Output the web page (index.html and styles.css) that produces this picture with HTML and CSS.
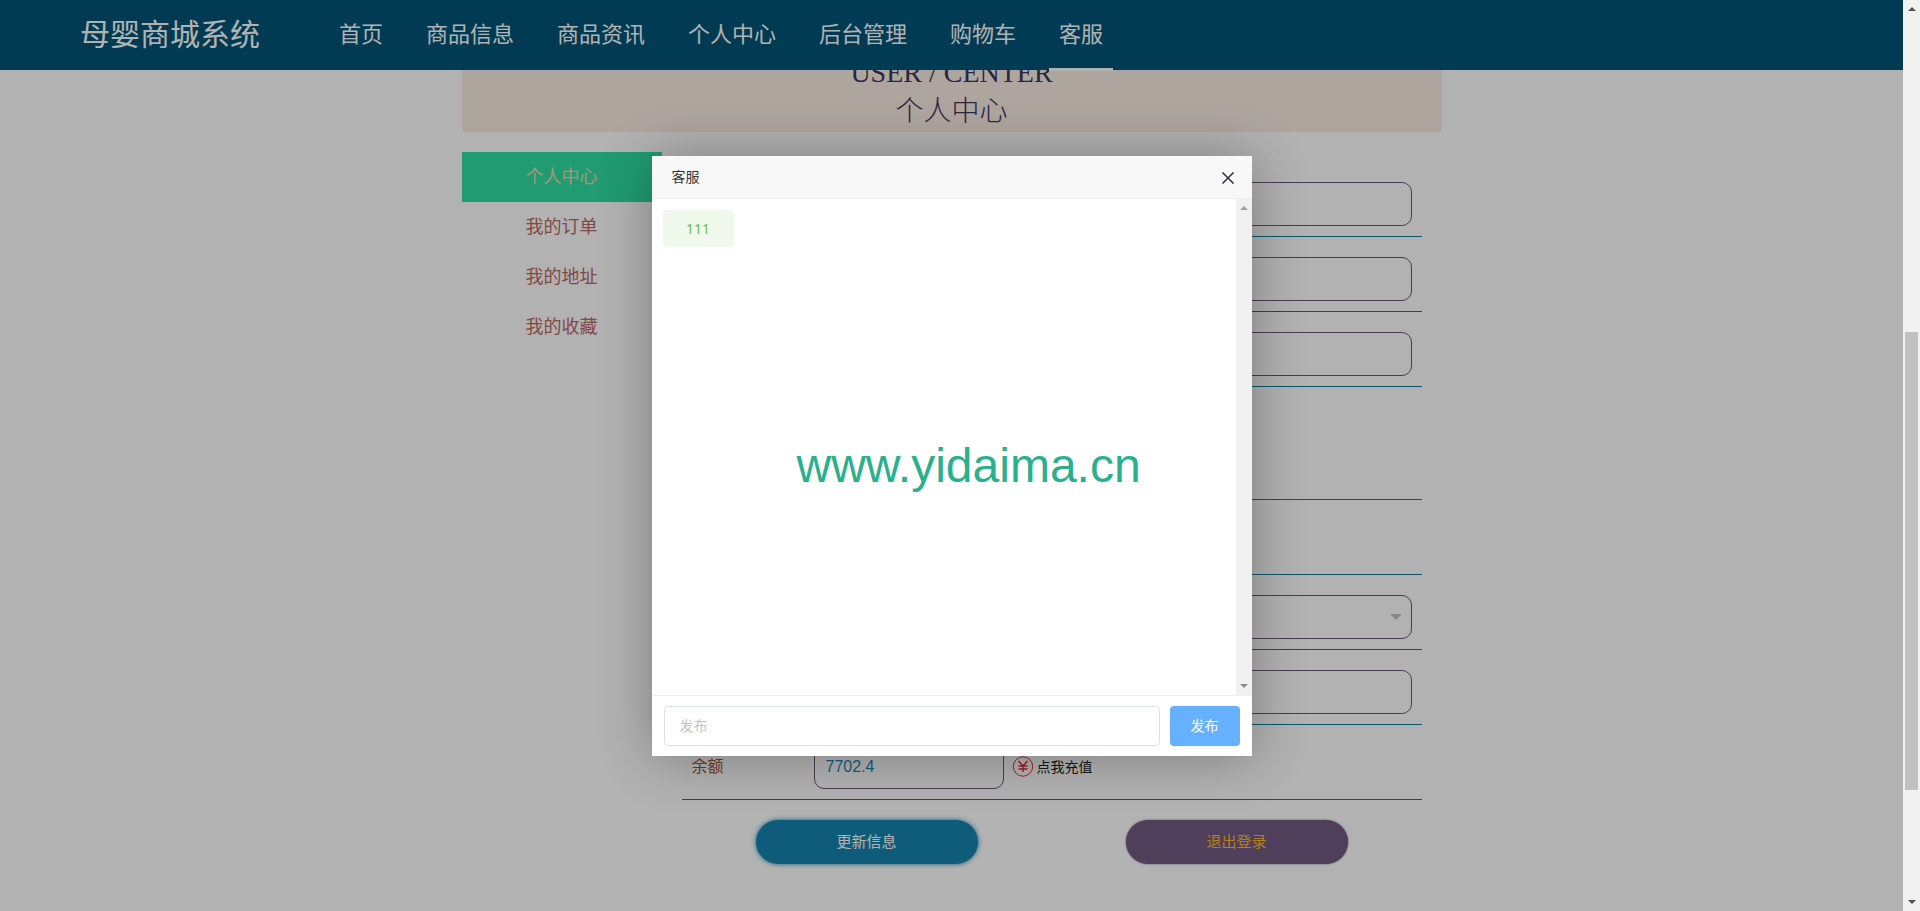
FILE: index.html
```
<!DOCTYPE html>
<html lang="zh-CN">
<head>
<meta charset="utf-8">
<title>母婴商城系统</title>
<link rel="stylesheet" href="styles.css">
</head>
<body>
<div class="window">
  <div class="page">
    <header class="topbar">
      <div class="logo">母婴商城系统</div>
      <nav class="menu">
        <a href="#">首页</a>
        <a href="#">商品信息</a>
        <a href="#">商品资讯</a>
        <a href="#">个人中心</a>
        <a href="#">后台管理</a>
        <a href="#">购物车</a>
        <a href="#" class="current">客服</a>
      </nav>
    </header>
    <main class="center">
      <h1 class="banner"><span>USER / CENTER</span><span>个人中心</span></h1>
      <div class="columns">
        <nav class="side">
          <a href="#" class="active">个人中心</a>
          <a href="#">我的订单</a>
          <a href="#">我的地址</a>
          <a href="#">我的收藏</a>
        </nav>
        <form class="form">
          <div class="row"><input class="field" type="text"></div>
          <div class="row"><input class="field" type="text"></div>
          <div class="row"><input class="field" type="text"></div>
          <div class="row row-photo"></div>
          <div class="row"></div>
          <div class="row row-select">
            <select class="field"></select>
            <svg class="caret" width="12" height="6" viewBox="0 0 12 6"><path d="M0 0h12L6 6z" fill="#c2c2c2"/></svg>
          </div>
          <div class="row"><input class="field" type="text"></div>
          <div class="row">
            <label class="name" for="balance">余额</label>
            <input class="field field-short" id="balance" type="text" value="7702.4">
            <a class="recharge" href="#">
              <svg width="22" height="22" viewBox="0 0 22 22" fill="none" stroke="#e8283a"><circle cx="11" cy="10.500" r="9.700" stroke-width="1"/><path d="M6.500 5 11 10l4.500-5M11 10v6M6.500 10h9M6.500 13h9" stroke-width="1.500"/></svg>
              点我充值
            </a>
          </div>
          <div class="actions">
            <button type="button" class="update">更新信息</button>
            <button type="button" class="logout">退出登录</button>
          </div>
        </form>
      </div>
    </main>
    <div class="shade"></div>
    <section class="dialog">
      <header class="dialog-head">
        <h2>客服</h2>
        <button type="button" class="close"><svg width="14" height="14" viewBox="0 0 14 14"><path d="M1.500 2.500l11 11M12.500 2.500l-11 11" stroke="#2e2d3c" stroke-width="1.500"/></svg></button>
      </header>
      <div class="chat">
        <div class="messages"><div class="message">111</div></div>
        <div class="chat-bar">
          <svg width="8" height="4" viewBox="0 0 8 4"><path d="M0 4h8L4 0z" fill="#a3a3a3"/></svg>
          <svg width="8" height="4" viewBox="0 0 8 4"><path d="M0 0h8L4 4z" fill="#8b8b8b"/></svg>
        </div>
      </div>
      <form class="send">
        <input type="text" placeholder="发布">
        <button type="button">发布</button>
      </form>
      <div class="watermark">www.yidaima.cn</div>
    </section>
  </div>
  <div class="page-bar">
    <svg width="8" height="4" viewBox="0 0 8 4"><path d="M0 4h8L4 0z" fill="#505050"/></svg>
    <div class="track"><div class="thumb"></div></div>
    <svg width="8" height="4" viewBox="0 0 8 4"><path d="M0 0h8L4 4z" fill="#505050"/></svg>
  </div>
</div>
</body>
</html>
```
FILE: styles.css
```
* { box-sizing: border-box; }
body {
  margin: 0;
  font: 14px/24px "Liberation Sans", "Noto Sans CJK SC", sans-serif;
  color: #333;
}
a { color: inherit; text-decoration: none; }
button, input, select { font: inherit; }
button { border: 0; padding: 0; cursor: pointer; }
.window { display: flex; height: 100vh; overflow: hidden; }
.page { position: relative; flex: 1; overflow: hidden; background: #fff; }

.topbar {
  position: relative;
  z-index: 1;
  display: flex;
  align-items: center;
  gap: 69px;
  height: 70px;
  padding-left: 80px;
  background: #005478;
  color: #fff;
}
.logo { font-size: 30px; line-height: 70px; }
.menu { display: flex; gap: 23px; font-size: 22px; line-height: 70px; }
.menu a { position: relative; padding: 0 10px; }
.menu .current::after {
  content: "";
  position: absolute;
  left: 0;
  right: 0;
  bottom: -1px;
  height: 3px;
  background: #fff;
}

.center { width: 980px; margin: -20px auto 0; }
.banner {
  display: flex;
  flex-direction: column;
  align-items: center;
  gap: 2px;
  margin: 0 0 20px;
  padding: 4px 0 2px;
  border-radius: 4px;
  background: #faece4;
  color: #3e355b;
  font: 28px/37px "Liberation Serif", "Noto Sans CJK SC", serif;
  font-weight: 300;
}
.columns { display: flex; align-items: flex-start; }
.side { width: 200px; font-size: 18px; line-height: 50px; text-align: center; color: #bb6a62; }
.side a { display: block; }
.side .active { background: #30dfa4; color: #efd6a6; }

.form { flex: 1; padding: 10px 20px; }
.row {
  display: flex;
  align-items: center;
  min-height: 75px;
  padding: 20px 10px 10px;
  border-bottom: 1px solid #0a809b;
}
.row-photo { min-height: 113px; }
.row-select { position: relative; }
.field {
  flex: 1;
  min-width: 0;
  height: 44px;
  padding: 0 11px;
  border: 1px solid #6a5675;
  border-radius: 10px;
  background: transparent;
  color: #2588b7;
  font-size: 16px;
  appearance: none;
}
.caret { position: absolute; right: 20px; top: 39px; }
.name { width: 122px; font-size: 16px; color: #9a5440; }
.field-short { flex: 0 0 190px; }
.recharge { display: flex; align-items: center; gap: 3px; margin-left: 8px; color: #222; }
.actions { display: grid; grid-template-columns: 1fr 1fr; justify-items: center; padding-top: 20px; }
.actions button { width: 60%; height: 44px; border-radius: 22px; font-size: 15px; }
.update { background: #1585ae; color: #fff; box-shadow: 0 0 5px #1585ae; }
.logout { background: #725b81; color: #ffb732; box-shadow: 0 0 2px #725b81; }

.shade { position: absolute; inset: 0; z-index: 2; background: rgba(0, 0, 0, .3); }
.dialog {
  position: absolute;
  z-index: 3;
  top: 50%;
  left: 50%;
  display: flex;
  flex-direction: column;
  width: 600px;
  height: 600px;
  margin: -300px 0 0 -300px;
  background: #fff;
  box-shadow: 1px 1px 50px rgba(0, 0, 0, .3);
}
.dialog-head {
  display: flex;
  align-items: center;
  justify-content: space-between;
  height: 43px;
  padding: 0 17px 0 20px;
  border-bottom: 1px solid #eee;
  background: #f8f8f8;
}
.dialog-head h2 { margin: 0; font-size: 14px; font-weight: 400; }
.close { display: flex; background: none; }
.chat { display: flex; flex: 1; border-bottom: 1px solid #eee; }
.messages { flex: 1; padding: 11px; }
.message {
  width: 71px;
  border-radius: 4px;
  background: #f0f9eb;
  color: #67c23a;
  font: 14px/37px "Noto Sans", "Noto Sans CJK SC", sans-serif;
  text-align: center;
}
.chat-bar, .page-bar {
  display: flex;
  flex-direction: column;
  align-items: center;
  justify-content: space-between;
  padding: 7px 0;
  background: #f1f1f1;
}
.chat-bar { width: 16px; }
.page-bar { width: 17px; }
.send { display: flex; gap: 10px; padding: 10px 12px; }
.send input {
  flex: 1;
  height: 40px;
  padding: 0 15px;
  border: 1px solid #dcdfe6;
  border-radius: 4px;
}
.send input::placeholder { color: #c0c4cc; }
.send button { width: 70px; height: 40px; border-radius: 4px; background: #66b1ff; color: #fff; }
.watermark {
  position: absolute;
  top: 280px;
  left: 145px;
  color: #2bb08d;
  font-size: 48px;
  line-height: 60px;
}
.track { flex: 1; width: 13px; padding-top: 321px; }
.thumb { height: 458px; background: #c1c1c1; }
```
